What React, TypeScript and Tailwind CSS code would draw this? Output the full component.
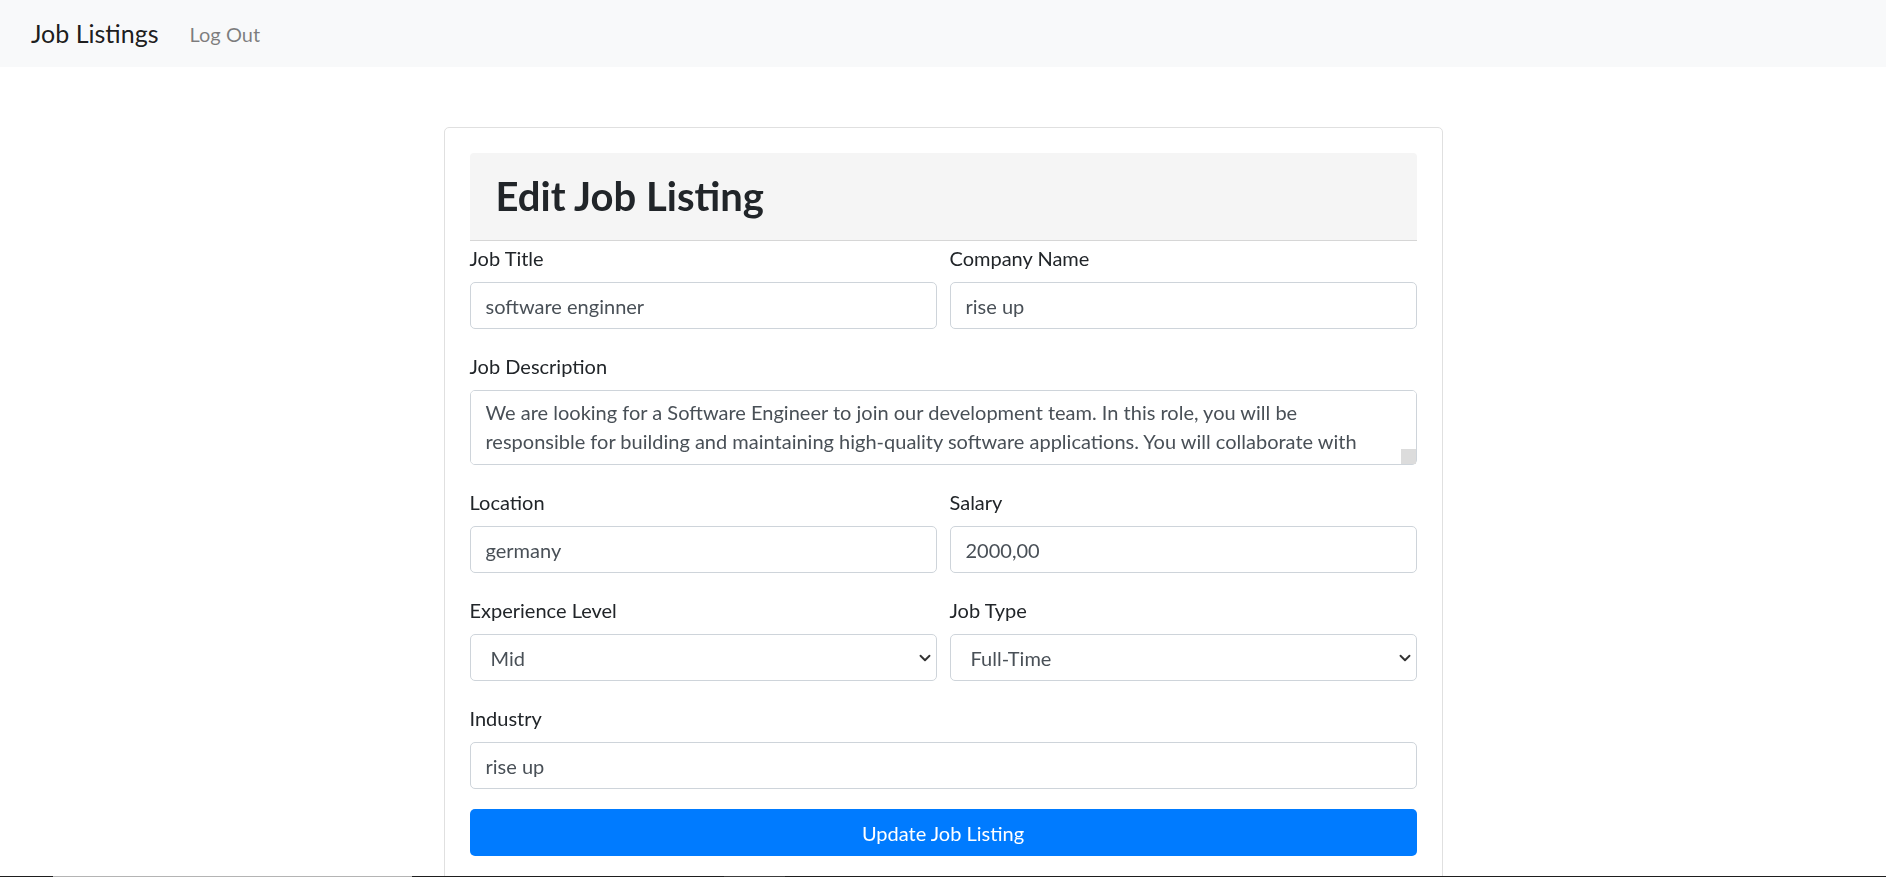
import { ChevronDown } from "lucide-react";
import type { FC } from "react";

const font = "font-['Segoe_UI',Lato,sans-serif]";

const description =
	"We are looking for a Software Engineer to join our development team. In this role, you will be responsible for building and maintaining high-quality software applications. You will collaborate with cross-functional teams to design, develop and test new features, fix bugs and improve performance across our products.";

const Field: FC<{ label: string; value: string; last?: boolean }> = ({ label, value, last }) => (
	<div className={last ? "mb-[20px]" : "mb-[23px]"}>
		<label className="block text-[20px] leading-[29px] mb-[9px] text-[#212529]">{label}</label>
		<input
			className="block w-full h-[47px] px-[15px] border border-[#ced4da] rounded-[5px] text-[20px] text-[#495057] bg-white outline-none"
			defaultValue={value}
		/>
	</div>
);

const SelectField: FC<{ label: string; value: string; options: string[] }> = ({ label, value, options }) => (
	<div className="mb-[23px]">
		<label className="block text-[20px] leading-[29px] mb-[9px] text-[#212529]">{label}</label>
		<div className="relative">
			<select
				className="block w-full h-[47px] pl-[20px] pr-[30px] border border-[#ced4da] rounded-[5px] text-[20px] text-[#495057] bg-white appearance-none outline-none"
				defaultValue={value}
			>
				{options.map((o) => (
					<option key={o}>{o}</option>
				))}
			</select>
			<ChevronDown
				size={18}
				strokeWidth={2.5}
				className="absolute right-[3px] top-1/2 -translate-y-1/2 text-[#333] pointer-events-none"
			/>
		</div>
	</div>
);

const App: FC = () => {
	return (
		<div className={`${font} min-h-screen bg-white`}>
			<nav className="h-[67px] bg-[#f8f9fa] flex flex-row items-center px-[31px]">
				<a className="text-[25px] text-black/90" href="#">
					Job Listings
				</a>
				<a className="ml-[31px] text-[20px] text-black/50" href="#">
					Log Out
				</a>
			</nav>

			<main className="flex justify-center pt-[60px]">
				<div className="w-[999px] border border-[#e0e0e0] rounded-[5px] px-[25px] pt-[25px] pb-[25px]">
					<div className="h-[88px] bg-[#f5f5f5] border-b border-[#d6d6d6] rounded-t-[4px] px-[26px] flex items-center">
						<h1 className="text-[40px] font-bold text-[#212529] leading-none -mt-[2px]">Edit Job Listing</h1>
					</div>

					<form className="mt-[3px]" onSubmit={(e) => e.preventDefault()}>
						<div className="grid grid-cols-2 gap-x-[13px]">
							<Field label="Job Title" value="software enginner" />
							<Field label="Company Name" value="rise up" />
						</div>

						<div className="mb-[23px]">
							<label className="block text-[20px] leading-[29px] mb-[9px] text-[#212529]">
								Job Description
							</label>
							<textarea
								className="block w-full h-[75px] py-[7px] px-[15px] border border-[#ced4da] rounded-[5px] text-[20px] leading-[28.8px] text-[#495057] bg-white outline-none overflow-y-scroll [&::-webkit-scrollbar]:w-[17px] [&::-webkit-scrollbar-track]:bg-[#f1f1f1] [&::-webkit-scrollbar-thumb]:bg-[#c1c1c1] [&::-webkit-scrollbar-thumb]:border-x-[2px] [&::-webkit-scrollbar-thumb]:border-[#f1f1f1] [&::-webkit-scrollbar-button:single-button]:block [&::-webkit-scrollbar-button:single-button]:h-[15px] [&::-webkit-scrollbar-button:single-button]:bg-[#f1f1f1] [&::-webkit-resizer]:bg-[#dcdcdc]"
								defaultValue={description}
							/>
						</div>

						<div className="grid grid-cols-2 gap-x-[13px]">
							<Field label="Location" value="germany" />
							<Field label="Salary" value="2000,00" />
							<SelectField label="Experience Level" value="Mid" options={["Entry", "Mid", "Senior"]} />
							<SelectField
								label="Job Type"
								value="Full-Time"
								options={["Full-Time", "Part-Time", "Contract", "Internship"]}
							/>
						</div>

						<Field label="Industry" value="rise up" last />

						<button
							type="submit"
							className="block w-full h-[47px] bg-[#007bff] text-white rounded-[5px] text-[20px]"
						>
							Update Job Listing
						</button>
					</form>
				</div>
			</main>

			{/* thin dark strip along the bottom edge of the window */}
			<div className="fixed left-0 right-0 bottom-0 h-px bg-[#1e1e1e] flex flex-row">
				<div className="ml-[53px] w-[359px] bg-[#b4b4b4]" />
				<div className="ml-[312px] w-[61px] bg-[#3c3c3c]" />
			</div>
		</div>
	);
};

export default App;
